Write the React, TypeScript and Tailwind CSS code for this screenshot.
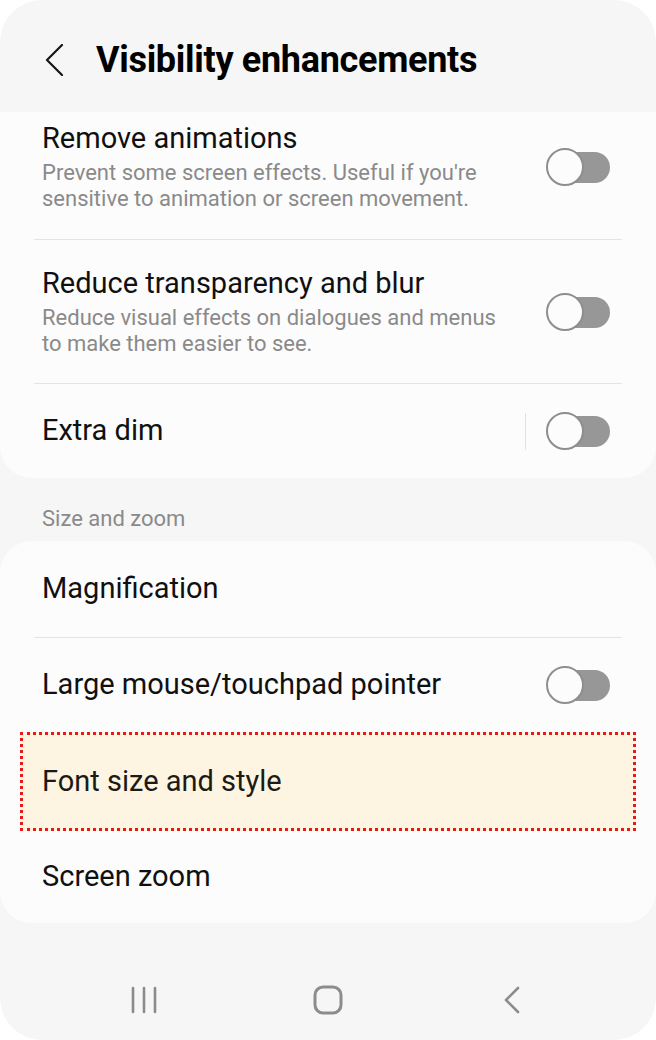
const font = { fontFamily: "Roboto, 'Noto Sans', sans-serif" };

function Toggle() {
  return (
    <div className="relative w-[64px] h-[38px] shrink-0">
      <div className="absolute right-0 top-[4px] w-[60px] h-[31px] rounded-full bg-[#979797]" />
      <div className="absolute left-0 top-0 w-[38px] h-[38px] rounded-full border-2 border-[#8e8e8e] bg-[#fcfcfc]" />
    </div>
  );
}

function Divider() {
  return <div className="mx-[34px] h-px bg-[#e4e4e4]" />;
}

function ToggleRow({ title, sub, top }: { title: string; sub: string[]; top?: boolean }) {
  return (
    <div className={top ? "flex items-center pl-[42px] pr-[46px] pt-[9px] pb-[27px]" : "flex items-center pl-[42px] pr-[46px] pt-[26px] pb-[26px]"}>
      <div className="flex-1">
        <p className="text-[29px] leading-[34px] text-[#101010]">{title}</p>
        <p className="mt-[5px] text-[22px] leading-[26px] text-[#8a8a8a] whitespace-nowrap">
          {sub[0]}
          <br />
          {sub[1]}
        </p>
      </div>
      <Toggle />
    </div>
  );
}

export default function App() {
  return (
    <div className="w-[656px] h-[1040px] bg-white" style={font}>
      <div className="w-full h-full bg-[#f6f6f6] rounded-[42px] overflow-hidden flex flex-col">
        {/* Header */}
        <div className="h-[112px] shrink-0 flex items-center pl-[44px] pt-[8px]">
          <svg width="20" height="32" viewBox="0 0 20 32" fill="none" className="shrink-0">
            <path d="M18 1 L3 16 L18 31" stroke="#161616" strokeWidth="2.2" strokeLinecap="round" strokeLinejoin="round" />
          </svg>
          <h1 className="ml-[32px] text-[36px] font-bold text-black tracking-[-0.3px]">
            Visibility enhancements
          </h1>
        </div>

        {/* Card 1 (scrolled) */}
        <div className="bg-[#fcfcfc] rounded-b-[32px] shrink-0">
          <ToggleRow
            top
            title="Remove animations"
            sub={["Prevent some screen effects. Useful if you're", "sensitive to animation or screen movement."]}
          />
          <Divider />
          <ToggleRow
            title="Reduce transparency and blur"
            sub={["Reduce visual effects on dialogues and menus", "to make them easier to see."]}
          />
          <Divider />
          <div className="h-[94px] flex items-center pl-[42px] pr-[46px]">
            <p className="flex-1 text-[29px] text-[#101010]">Extra dim</p>
            <div className="w-px h-[37px] bg-[#e2e2e2] mr-[20px]" />
            <Toggle />
          </div>
        </div>

        {/* Section label */}
        <div className="h-[63px] shrink-0 flex items-center pl-[42px] pt-[17px]">
          <p className="text-[22px] text-[#8a8a8a]">Size and zoom</p>
        </div>

        {/* Card 2 */}
        <div className="bg-[#fcfcfc] rounded-[32px] shrink-0">
          <div className="h-[96px] flex items-center pl-[42px] pr-[46px]">
            <p className="text-[29px] text-[#101010]">Magnification</p>
          </div>
          <Divider />
          <div className="h-[94px] flex items-center pl-[42px] pr-[46px]">
            <p className="flex-1 text-[29px] text-[#101010]">Large mouse/touchpad pointer</p>
            <Toggle />
          </div>
          <div className="mx-[20px] h-[99px] flex items-center pl-[19px] bg-[#fdf4e2] border-[3px] border-dotted border-[#e8191b]">
            <p className="text-[29px] text-[#1c1a14]">Font size and style</p>
          </div>
          <div className="h-[92px] flex items-center pl-[42px]">
            <p className="text-[29px] text-[#101010]">Screen zoom</p>
          </div>
        </div>

        <div className="flex-1" />

        {/* Navigation bar */}
        <div className="h-[80px] shrink-0 flex items-center justify-center gap-[124px]">
          <div className="w-[60px] flex justify-center">
            <svg width="28" height="28" viewBox="0 0 28 28" fill="none">
              <path d="M3 2 V26 M14 2 V26 M25 2 V26" stroke="#8c8c8c" strokeWidth="2.6" strokeLinecap="round" />
            </svg>
          </div>
          <div className="w-[60px] flex justify-center">
            <svg width="30" height="30" viewBox="0 0 30 30" fill="none">
              <rect x="2" y="2" width="26" height="26" rx="8" stroke="#8c8c8c" strokeWidth="3" />
            </svg>
          </div>
          <div className="w-[60px] flex justify-center">
            <svg width="18" height="28" viewBox="0 0 18 28" fill="none">
              <path d="M15 2 L3 14 L15 26" stroke="#8c8c8c" strokeWidth="2.6" strokeLinecap="round" strokeLinejoin="round" />
            </svg>
          </div>
        </div>
      </div>
    </div>
  );
}
